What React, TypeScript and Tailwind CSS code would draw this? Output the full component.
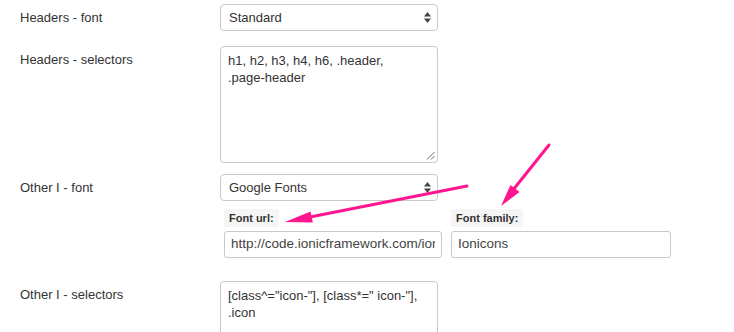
import React from "react";

function SelectArrows() {
  return (
    <svg width="7" height="11" viewBox="0 0 7 11" className="shrink-0">
      <polygon points="3.5,0 7,4.5 0,4.5" fill="#444" />
      <polygon points="0,6.5 7,6.5 3.5,11" fill="#444" />
    </svg>
  );
}

function Select({ value }: { value: string }) {
  return (
    <div className="w-[218px] h-[27px] rounded-[4px] border border-[#c9c9c9] bg-white flex items-center justify-between pl-[8px] pr-[6px]">
      <span className="text-[13px] text-[#333] leading-none">{value}</span>
      <SelectArrows />
    </div>
  );
}

function TextArea({ lines, height, handle }: { lines: string[]; height: number; handle?: boolean }) {
  return (
    <div
      className="relative w-[218px] rounded-[4px] border border-[#c9c9c9] bg-white px-[7px] pt-[5px] text-[13px] leading-[17px] text-[#333]"
      style={{ height }}
    >
      {lines.map((l, i) => (
        <div key={i} className="whitespace-nowrap">{l}</div>
      ))}
      {handle && (
        <svg width="9" height="9" viewBox="0 0 9 9" className="absolute right-[2px] bottom-[2px]">
          <line x1="1" y1="8.5" x2="8.5" y2="1" stroke="#666" strokeWidth="1" />
          <line x1="5" y1="8.5" x2="8.5" y2="5" stroke="#666" strokeWidth="1" />
        </svg>
      )}
    </div>
  );
}

function Row({ label, children, className = "" }: { label: string; children: React.ReactNode; className?: string }) {
  return (
    <div className={"flex items-start " + className}>
      <div className="w-[220px] shrink-0 pl-[20px] h-[27px] flex items-center text-[13px] text-[#333]">{label}</div>
      {children}
    </div>
  );
}

function SubField({ label, value, width }: { label: string; value: string; width: number }) {
  return (
    <div className="flex flex-col gap-[4px]" style={{ width }}>
      <div className="flex h-[18px]">
        <span className="flex items-center h-[18px] px-[5px] rounded-[2px] bg-[#f5f5f5] text-[11px] font-bold text-[#333]">
          {label}
        </span>
      </div>
      <div className="h-[27px] w-full rounded-[3px] border border-[#c9c9c9] bg-white flex items-center px-[6px] overflow-hidden">
        <span className="text-[13.5px] text-[#444] whitespace-nowrap overflow-hidden">{value}</span>
      </div>
    </div>
  );
}

export default function App() {
  return (
    <div className="relative w-[734px] h-[332px] overflow-hidden bg-white font-['Liberation_Sans',Arial,sans-serif] text-[#333]">
      <div className="flex flex-col pt-[4px]">
        <Row label="Headers - font">
          <Select value="Standard" />
        </Row>
        <Row label="Headers - selectors" className="mt-[15px]">
          <TextArea lines={["h1, h2, h3, h4, h6, .header,", ".page-header"]} height={117} handle />
        </Row>
        <Row label="Other I - font" className="mt-[11px]">
          <Select value="Google Fonts" />
        </Row>
        <div className="ml-[224px] mt-[8px] flex gap-[9px]">
          <SubField label="Font url:" value="http://code.ionicframework.com/ion" width={218} />
          <SubField label="Font family:" value="Ionicons" width={220} />
        </div>
        <Row label="Other I - selectors" className="mt-[23px]">
          <TextArea lines={['[class^="icon-"], [class*=" icon-"],', ".icon"]} height={70} />
        </Row>
      </div>
      <svg className="absolute inset-0 pointer-events-none" width="734" height="332" viewBox="0 0 734 332">
        <line x1="467" y1="186" x2="305" y2="218" stroke="#ff1590" strokeWidth="3" strokeLinecap="round" />
        <polygon points="285,222 310.5,211.5 312.8,222.5" fill="#ff1590" />
        <line x1="549" y1="145" x2="513" y2="190" stroke="#ff1590" strokeWidth="3" strokeLinecap="round" />
        <polygon points="501,206 510.5,185 519.5,192" fill="#ff1590" />
      </svg>
    </div>
  );
}
